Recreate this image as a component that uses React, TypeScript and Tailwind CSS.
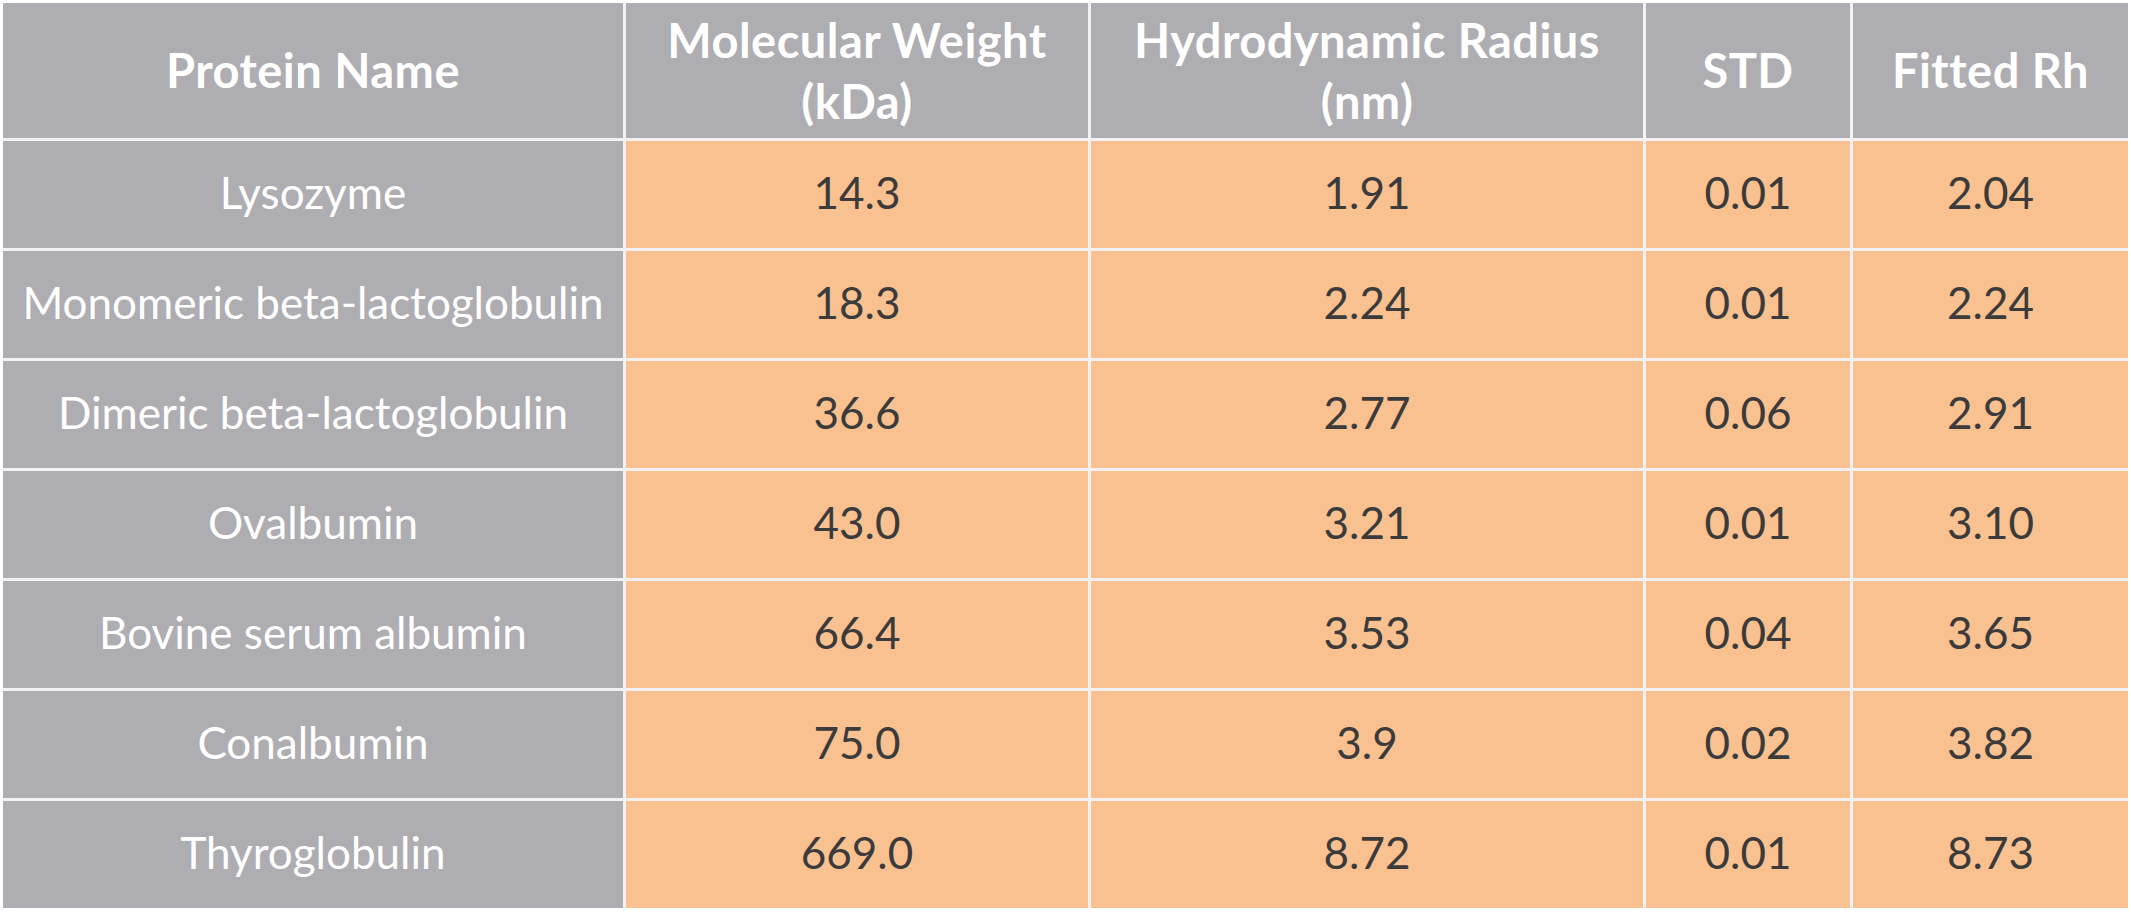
const rows = [
  ["Lysozyme", "14.3", "1.91", "0.01", "2.04"],
  ["Monomeric beta-lactoglobulin", "18.3", "2.24", "0.01", "2.24"],
  ["Dimeric beta-lactoglobulin", "36.6", "2.77", "0.06", "2.91"],
  ["Ovalbumin", "43.0", "3.21", "0.01", "3.10"],
  ["Bovine serum albumin", "66.4", "3.53", "0.04", "3.65"],
  ["Conalbumin", "75.0", "3.9", "0.02", "3.82"],
  ["Thyroglobulin", "669.0", "8.72", "0.01", "8.73"],
];

const headers = [
  ["Protein Name"],
  ["Molecular Weight", "(kDa)"],
  ["Hydrodynamic Radius", "(nm)"],
  ["STD"],
  ["Fitted Rh"],
];

export default function App() {
  return (
    <div className="min-h-screen bg-white p-[3px] font-['Lato',sans-serif]">
      <div className="grid grid-cols-[620px_462px_552px_204px_275px] grid-rows-[135px_repeat(7,107px)] gap-[3px] bg-[#f2f2f4]">
        {headers.map((lines, i) => (
          <div
            key={i}
            className="flex flex-col items-center justify-center bg-[#aeadb2] text-center text-[47px] font-bold leading-[61px] tracking-[0.01em] text-white"
          >
            {lines.map((l) => (
              <span key={l}>{l}</span>
            ))}
          </div>
        ))}
        {rows.map((row) =>
          row.map((cell, j) => (
            <div
              key={row[0] + j}
              className={
                j === 0
                  ? "flex items-center justify-center bg-[#aeadb2] pb-[6px] text-[44px] text-white"
                  : "flex items-center justify-center bg-[#f9c190] pb-[6px] text-[44px] text-[#3b3b3b]"
              }
            >
              {cell}
            </div>
          ))
        )}
      </div>
    </div>
  );
}
